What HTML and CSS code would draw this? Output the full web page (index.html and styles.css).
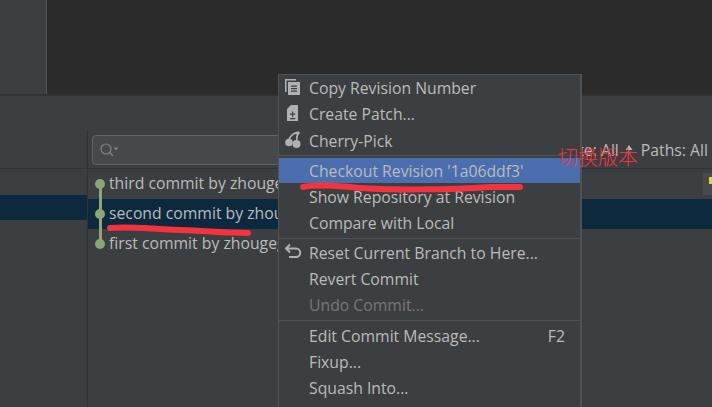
FILE: index.html
```html
<!DOCTYPE html>
<html lang="en">
<head>
<meta charset="utf-8">
<title>Git log context menu</title>
<link rel="stylesheet" href="styles.css">
</head>
<body>
<div class="ide">
  <div class="top">
    <div class="top-side"></div>
    <div class="editor"></div>
  </div>
  <div class="log">
    <div class="branches">
      <div class="toolbar"></div>
      <div class="branch-list"><div class="branch-selected"></div></div>
    </div>
    <div class="commits">
      <div class="toolbar commit-toolbar">
        <div class="search">
          <svg class="search-icon" width="22" height="16" viewBox="0 0 22 16"><circle cx="7" cy="7" r="5" fill="none" stroke="#7f8386" stroke-width="1.2"/><path d="M10.6 10.6 14 14" stroke="#7f8386" stroke-width="1.4"/><path d="M14.5 5.5h5l-2.5 3z" fill="#7f8386"/></svg>
        </div>
        <div class="filters">
          <span>Date: All</span>
          <svg class="sort" width="8" height="10" viewBox="0 0 8 10"><path d="M4 0 7.5 5h-7z" fill="#bbb"/><path d="M4 10 1.5 6.5h5z" fill="#77797b"/></svg>
          <span>Paths: All</span>
        </div>
      </div>
      <div class="commit-list">
        <div class="graph-line"></div>
        <div class="commit"><span class="dot"></span><span class="msg">third commit by zhougege</span><span class="tag"><i></i></span></div>
        <div class="commit selected"><span class="dot"></span><span class="msg">second commit by zhougege</span></div>
        <div class="commit"><span class="dot"></span><span class="msg">first commit by zhougege</span></div>
      </div>
    </div>
  </div>
</div>

<div class="menu">
  <div class="item"><svg class="icon" width="18" height="18" viewBox="0 0 18 18"><path d="M1 1h11v1.500H2.500V14H1z" fill="#afb1b3"/><path d="M4 4h12v13H4z" fill="#afb1b3"/><path d="M7 7.500h6v1.200H7zM7 10h6v1.200H7zM7 12.500h6v1.200H7z" fill="#3c3f41"/></svg><span>Copy Revision Number</span></div>
  <div class="item"><svg class="icon" width="18" height="18" viewBox="0 0 18 18"><path d="M7 1h7v16H3V5z" fill="#afb1b3"/><path d="M8 7.500h1.200v2h2v1.200h-2v2H8v-2H6V9.500h2zM6 14h5.200v1.200H6z" fill="#3c3f41"/></svg><span>Create Patch...</span></div>
  <div class="item"><svg class="icon" width="18" height="18" viewBox="0 0 18 18"><circle cx="5" cy="11.500" r="3.800" fill="#afb1b3"/><circle cx="12.500" cy="13" r="4" fill="#afb1b3"/><path d="M5 8C6 5 10 2 15.500 1.500 13 3 12.500 6 12.800 9M15.500 1.500C12 1 8 3 5 8" fill="none" stroke="#afb1b3" stroke-width="1.600"/></svg><span>Cherry-Pick</span></div>
  <div class="sep"></div>
  <div class="item active"><span>Checkout Revision '1a06ddf3'</span></div>
  <div class="item"><span>Show Repository at Revision</span></div>
  <div class="item"><span>Compare with Local</span></div>
  <div class="sep sep-tight"></div>
  <div class="item"><svg class="icon" width="18" height="18" viewBox="0 0 18 18"><path d="M6 2.500 2 6.500l4 4M2.500 6.500H12a4 4 0 0 1 0 8.500H5" fill="none" stroke="#afb1b3" stroke-width="2"/></svg><span>Reset Current Branch to Here...</span></div>
  <div class="item"><span>Revert Commit</span></div>
  <div class="item disabled"><span>Undo Commit...</span></div>
  <div class="sep"></div>
  <div class="item"><span>Edit Commit Message...</span><span class="key">F2</span></div>
  <div class="item"><span>Fixup...</span></div>
  <div class="item"><span>Squash Into...</span></div>
</div>

<svg class="marks" width="712" height="407" viewBox="0 0 712 407">
  <path d="M303 187C318 184 338 186 360 188S450 190 490 187L520 187" fill="none" stroke="#f5333f" stroke-width="6" stroke-linecap="round"/>
  <path d="M110 228C130 226 150 229 180 230S220 233 248 233" fill="none" stroke="#f5333f" stroke-width="6" stroke-linecap="round"/>
</svg>
<span class="note">切换版本</span>
</body>
</html>
```

FILE: styles.css
```css
* { box-sizing: border-box; }
html, body { margin: 0; height: 100%; overflow: hidden; background: #3c3f41; }
body { font: 15.750px/20px "Open Sans", "Noto Sans", sans-serif; color: #bbbbbb; }

.ide { display: flex; flex-direction: column; height: 407px; }

.top { display: flex; height: 96px; flex: none; border-bottom: 2px solid #323232; }
.top-side { width: 47px; background: #3c3f41; border-right: 1px solid #555; }
.editor { flex: 1; background: #2b2b2b; }

.log { display: flex; flex: 1; }
.branches { width: 87px; flex: none; }
.commits { flex: 1; min-width: 0; }

.toolbar { height: 73px; border-bottom: 1px solid #323232; }
.commit-toolbar { display: flex; align-items: flex-end; gap: 10px; padding: 0 4px 3px 4px; border-left: 1px solid #323232; position: relative; }
.commit-toolbar::before { content: ""; position: absolute; left: -1px; top: 0; height: 34px; width: 1px; background: #3c3f41; }

.search { width: 440px; height: 30px; flex: none; display: flex; align-items: center; padding-left: 6px; background: #45494a; border: 1px solid #646464; border-radius: 4px; }
.search-icon { display: block; }

.filters { display: flex; align-items: center; gap: 6px; margin-left: auto; height: 28px; margin-bottom: 1px; white-space: nowrap; }
.filters span + .sort + span { margin-left: 2px; }
.sort { display: block; }

.branch-list { padding-top: 26px; }
.branch-selected { height: 25px; background: #0d293e; }

.commit-list { position: relative; border-left: 1px solid #323232; height: 238px; }
.commit { display: flex; align-items: center; height: 30px; padding-left: 7px; gap: 4px; position: relative; white-space: nowrap; }
.commit .msg { position: relative; top: -1px; }
.commit.selected { background: #0d293e; }
.dot { width: 10px; height: 10px; border-radius: 50%; background: #8ea577; flex: none; position: relative; z-index: 1; }
.graph-line { position: absolute; left: 10.500px; top: 15px; width: 3px; height: 60px; background: #8ea577; z-index: 1; }
.tag { width: 9px; height: 22px; background: #47494b; position: absolute; right: 0; top: 4px; padding: 4px 0 0 6px; }
.tag i { display: block; width: 3px; height: 7px; background: #e6d33a; }

.menu { position: absolute; left: 278px; top: 74px; width: 304px; height: 340px; background: #3c3f41; border: 1px solid #515151; border-right-width: 2px; display: flex; flex-direction: column; }
.item { display: flex; align-items: center; height: 26.300px; flex: none; padding: 0 15px 0 30px; position: relative; white-space: nowrap; }
.item.active { background: #4b6eaf; height: 25px; padding-top: 1px; margin-bottom: 1px; }
.item.disabled { color: #777777; }
.key { margin-left: auto; }
.icon { position: absolute; left: 5px; top: 3px; }
.sep { height: 1px; background: #515151; margin: 1.500px 0 1.500px; flex: none; }
.sep-tight { margin-bottom: 0.500px; }

.marks { position: absolute; left: 0; top: 0; pointer-events: none; }
.note { position: absolute; left: 558px; top: 145px; font: 300 20px/24px "Noto Sans CJK SC", sans-serif; color: #f5333f; white-space: nowrap; }
```
